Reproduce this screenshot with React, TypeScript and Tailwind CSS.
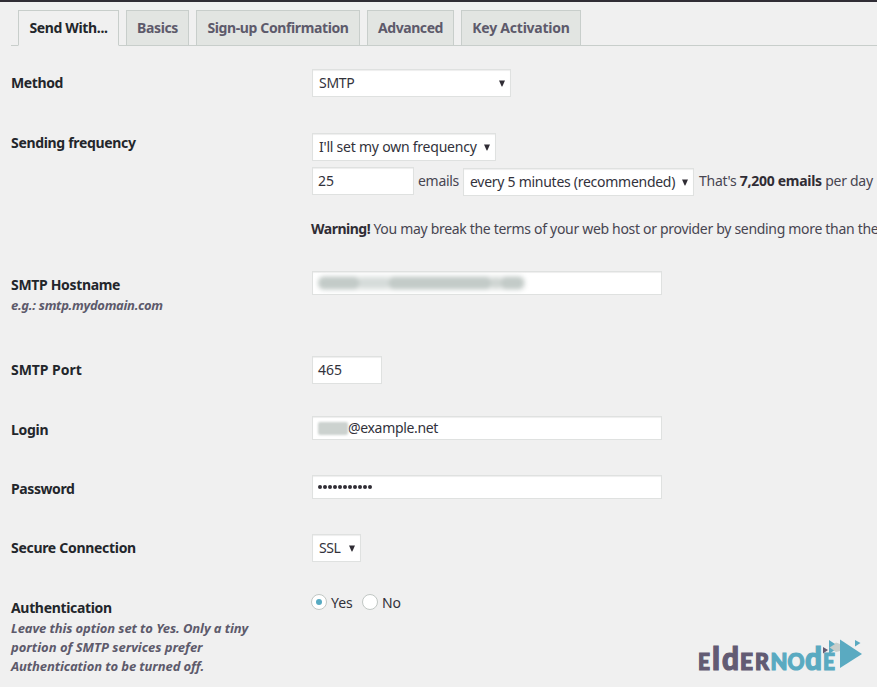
import type { ReactNode } from 'react';

function Tab({ label, className, tracking }: { label: string; className: string; tracking: string }) {
  return (
    <div className={`box-border flex h-9 shrink-0 justify-center border border-[#c8cecb] pt-[7px] text-[14px] leading-5 font-bold whitespace-nowrap ${className}`}>
      <span className={tracking}>{label}</span>
    </div>
  );
}

function Row({ label, hint, className, labelClass = 'pt-1', tracking, children }: {
  label: string;
  hint?: ReactNode;
  className: string;
  labelClass?: string;
  tracking: string;
  children: ReactNode;
}) {
  return (
    <div className={`flex shrink-0 pl-[11px] ${className}`}>
      <div className={`w-[301px] shrink-0 whitespace-nowrap ${labelClass}`}>
        <div className={`text-[14px] leading-5 font-bold text-[#23262b] ${tracking}`}>{label}</div>
        {hint}
      </div>
      <div className="shrink-0">{children}</div>
    </div>
  );
}

function Select({ value, className, tracking }: { value: string; className: string; tracking: string }) {
  return (
    <div className={`flex h-7 shrink-0 items-center justify-between border border-[#dfe1e0] bg-white pr-[5px] pl-[6px] shadow-[inset_0_1px_1px_#eeeeee] ${className}`}>
      <span className={`whitespace-nowrap text-[#32323b] ${tracking}`}>{value}</span>
      <svg width="6" height="7" viewBox="0 0 6 7" className="shrink-0">
        <path d="M0 0.5H6L3.3 6.5H2.7Z" fill="#302d35" />
      </svg>
    </div>
  );
}

function Field({ className, children }: { className: string; children?: ReactNode }) {
  return (
    <div className={`flex shrink-0 items-center overflow-hidden border border-[#dfe1e0] bg-white pl-[5px] whitespace-nowrap text-[#32323b] shadow-[inset_0_1px_1px_#eeeeee] ${className}`}>
      {children}
    </div>
  );
}

function Radio({ checked }: { checked?: boolean }) {
  return (
    <span className="flex size-4 shrink-0 items-center justify-center rounded-full border border-[#c1c7c4] bg-white">
      {checked && <span className="size-1.5 rounded-full bg-[#57aac2]" />}
    </span>
  );
}

function Logo() {
  return (
    <svg width="166" height="36" viewBox="0 0 166 36" fontFamily="Lato, sans-serif" fontWeight="900" strokeWidth="1.2" className="overflow-visible">
      <g fill="#625b73" stroke="#625b73">
        <text x="0" y="30.5" fontSize="22" textLength="12" lengthAdjust="spacingAndGlyphs">E</text>
        <text x="14" y="30.5" fontSize="33" textLength="8" lengthAdjust="spacingAndGlyphs">l</text>
        <text x="24" y="30.5" fontSize="33" textLength="17" lengthAdjust="spacingAndGlyphs">d</text>
        <text x="42" y="30.5" fontSize="22" textLength="13" lengthAdjust="spacingAndGlyphs">E</text>
        <text x="57" y="30.5" fontSize="22" textLength="14" lengthAdjust="spacingAndGlyphs">R</text>
      </g>
      <g fill="#5aaac1" stroke="#5aaac1">
        <text x="72.5" y="30.5" fontSize="22" textLength="17" lengthAdjust="spacingAndGlyphs">N</text>
        <text x="89.5" y="30.5" fontSize="22" textLength="17" lengthAdjust="spacingAndGlyphs">O</text>
        <text x="107" y="30.5" fontSize="33" textLength="17" lengthAdjust="spacingAndGlyphs">d</text>
        <text x="125" y="30.5" fontSize="22" textLength="12" lengthAdjust="spacingAndGlyphs">E</text>
      </g>
      <path d="M131 9L138 3.5L142 5V12L138 13Z" fill="#c8cecb" />
      <path d="M131 1L137 5L131 9Z" fill="#5aaac1" />
      <path d="M131 8L136 11.5L131 15Z" fill="#5aaac1" />
      <path d="M142 0.5L164 15L142 29Z" fill="#5aaac1" />
      <path d="M157 1L162.5 4L157 7.5Z" fill="#5aaac1" />
      <path d="M125 8L130 11L125 14.5Z" fill="#625b73" />
    </svg>
  );
}

const hintText = "text-[13px] font-bold italic text-[#5d5a6b]";

export default function App() {
  return (
    <div className="relative flex h-[687px] w-[877px] flex-col overflow-hidden bg-[#f0f0f0] font-['Noto_Sans',sans-serif] text-[14px] leading-5 text-[#474550]">
      <div className="h-0.5 shrink-0 bg-[#302d35]" />
      <div className="flex h-11 shrink-0 pt-2 pl-[11px]">
        <div className="w-[7px] border-b border-[#c8cecb]" />
        <Tab label="Send With..." className="w-[101px] border-b-transparent text-[#23262b]" tracking="tracking-[-0.35px]" />
        <div className="w-[7px] border-b border-[#c8cecb]" />
        <Tab label="Basics" className="w-[63px] bg-[#e2e5e2] text-[#5d5a6b]" tracking="tracking-[-0.4px]" />
        <div className="w-[7px] border-b border-[#c8cecb]" />
        <Tab label="Sign-up Confirmation" className="w-[164px] bg-[#e2e5e2] text-[#5d5a6b]" tracking="tracking-[-0.38px]" />
        <div className="w-[7px] border-b border-[#c8cecb]" />
        <Tab label="Advanced" className="w-[87px] bg-[#e2e5e2] text-[#5d5a6b]" tracking="tracking-[-0.42px]" />
        <div className="w-[7px] border-b border-[#c8cecb]" />
        <Tab label="Key Activation" className="w-[120px] bg-[#e2e5e2] text-[#5d5a6b]" tracking="tracking-[-0.23px]" />
        <div className="flex-1 border-b border-[#c8cecb]" />
      </div>

      <div className="flex flex-col pt-[23px]">
        <Row label="Method" className="h-16" tracking="tracking-[-0.4px]">
          <Select value="SMTP" className="w-[199px]" tracking="tracking-[-0.3px]" />
        </Row>

        <Row label="Sending frequency" className="h-[138px]" labelClass="" tracking="tracking-[-0.33px]">
          <Select value="I'll set my own frequency" className="w-[184px]" tracking="tracking-[-0.23px]" />
          <div className="mt-1.5 flex">
            <Field className="h-7 w-[102px]">25</Field>
            <span className="mt-1 ml-[4px] w-[45px] tracking-[-0.3px]">emails</span>
            <div className="pt-px">
              <Select value="every 5 minutes (recommended)" className="w-[231px]" tracking="tracking-[-0.27px]" />
            </div>
            <span className="mt-1 ml-[5px] tracking-[-0.28px] whitespace-nowrap">
              That's <b className="text-[#302d35]">7,200 emails</b> per day
            </span>
          </div>
          <p className="mt-[23px] -ml-px tracking-[-0.31px] whitespace-nowrap">
            <b className="tracking-[-0.5px] text-[#302d35]">Warning!</b> You may break the terms of your web host or provider by sending more than the
          </p>
        </Row>

        <Row
          label="SMTP Hostname"
          className="h-[85px]"
          tracking="tracking-[-0.33px]"
          hint={<div className={`${hintText} tracking-[-0.3px]`}>e.g.: smtp.mydomain.com</div>}
        >
          <Field className="h-6 w-[350px]">
            <span className="flex h-4 w-[208px] items-center rounded-md bg-[#eef0ef] blur-[2px]">
              <span className="h-3 w-[42px] rounded-full bg-[#c3cbc8]" />
              <span className="h-2.5 w-7 bg-[#d6dcda]" />
              <span className="h-3 w-[104px] rounded-md bg-[#c3cbc8]" />
              <span className="h-2.5 w-2 bg-[#d0d6d3]" />
              <span className="h-3 w-6 rounded-full bg-[#c3cbc8]" />
            </span>
          </Field>
        </Row>

        <Row label="SMTP Port" className="h-[60px]" tracking="tracking-[-0.05px]">
          <Field className="h-7 w-[70px]">465</Field>
        </Row>

        <Row label="Login" className="h-[59px]" tracking="tracking-[-0.3px]">
          <Field className="h-6 w-[350px]">
            <span className="h-[13px] w-[30px] rounded-xs bg-[#ccd2cf] blur-[1px]" />
            <span className="tracking-[-0.33px]">@example.net</span>
          </Field>
        </Row>

        <Row label="Password" className="h-[59px]" tracking="tracking-[-0.4px]">
          <Field className="h-6 w-[350px]">
            <span className="flex gap-px">
              {Array.from({ length: 11 }, (_, i) => (
                <span key={i} className="size-1 rounded-full bg-[#302d35]" />
              ))}
            </span>
          </Field>
        </Row>

        <Row label="Secure Connection" className="h-[60px]" tracking="tracking-[-0.3px]">
          <Select value="SSL" className="w-[49px]" tracking="tracking-[-0.4px]" />
        </Row>

        <Row
          label="Authentication"
          className="h-[93px]"
          tracking="tracking-[-0.33px]"
          hint={
            <div className={`${hintText} mt-px leading-[19px]`}>
              <div className="tracking-[-0.09px]">Leave this option set to Yes. Only a tiny</div>
              <div>portion of SMTP services prefer</div>
              <div className="tracking-[-0.09px]">Authentication to be turned off.</div>
            </div>
          }
        >
          <div className="-ml-px flex items-start text-[#32323b]">
            <Radio checked />
            <span className="-mt-px ml-1 w-[31px]">Yes</span>
            <Radio />
            <span className="-mt-px ml-1 tracking-[-0.2px]">No</span>
          </div>
        </Row>
      </div>

      <div className="absolute top-[639px] left-[698px]">
        <Logo />
      </div>
    </div>
  );
}
